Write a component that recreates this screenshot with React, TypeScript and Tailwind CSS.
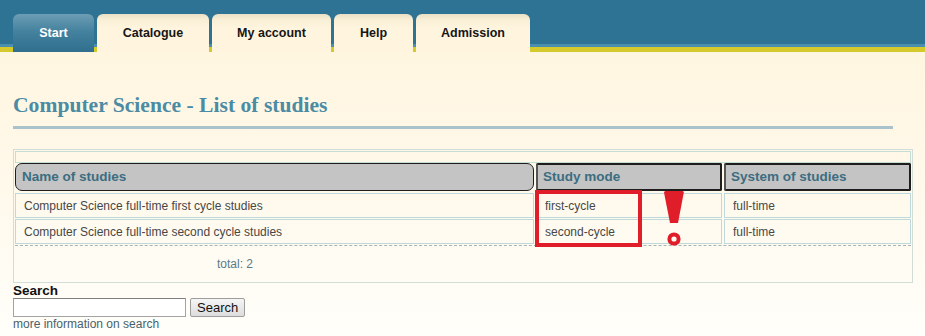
const TABS = [
  { label: 'Start', active: true, width: 'w-[81px]' },
  { label: 'Catalogue', active: false, width: 'w-[112px]' },
  { label: 'My account', active: false, width: 'w-[119px]' },
  { label: 'Help', active: false, width: 'w-[79px]' },
  { label: 'Admission', active: false, width: 'w-[114px]' },
]

const ROWS = [
  { name: 'Computer Science full-time first cycle studies', mode: 'first-cycle', system: 'full-time' },
  { name: 'Computer Science full-time second cycle studies', mode: 'second-cycle', system: 'full-time' },
]

function Exclamation() {
  return (
    <svg width="26" height="60" viewBox="0 0 26 60" className="absolute left-[647px] top-[40px]">
      <path d="M3 2.5 Q3 1 4.5 1 L21.5 1 Q23 1 22.8 2.5 L17 33 L9 33 Z" fill="#e01e2a" />
      <circle cx="13" cy="49" r="4.6" fill="none" stroke="#e01e2a" strokeWidth="4" />
    </svg>
  )
}

export default function App() {
  return (
    <div className="min-h-[336px] bg-[linear-gradient(to_bottom,#fff5dc_0%,#fff8e8_45%,#fffefa_100%)] font-['Liberation_Sans',Arial,sans-serif] text-[#444]">
      {/* Nav bar */}
      <nav className="h-[52px] pl-[13px] pt-[14px] flex items-end gap-[3px] bg-[linear-gradient(to_bottom,#2f7394_0px,#2f7394_44px,#4b8fae_44px,#4b8fae_47px,#d6c92c_47px,#d6c92c_52px)]">
        {TABS.map((t) =>
          t.active ? (
            <div
              key={t.label}
              className={`${t.width} h-[38px] rounded-t-[6px] flex items-center justify-center text-[12.5px] font-bold text-white bg-[linear-gradient(to_bottom,#6d9db4_0%,#44829f_45%,#2f6f8d_100%)]`}
            >
              {t.label}
            </div>
          ) : (
            <div
              key={t.label}
              className={`${t.width} h-[38px] rounded-t-[6px] flex items-center justify-center text-[12.5px] font-bold text-[#161616] bg-[linear-gradient(to_bottom,#e9e0c5_0px,#f8efd6_6px,#fff5de_14px,#fff5de_100%)]`}
            >
              {t.label}
            </div>
          )
        )}
      </nav>

      <main className="px-[13px]">
        <h1 className="mt-[40px] leading-[26px] text-[21.6px] font-bold text-[#4b8ba4] font-['Liberation_Serif','Times_New_Roman',serif]">
          Computer Science - List of studies
        </h1>
        <div className="mt-[8px] h-[3px] w-[880px] bg-[#a9c2cc]" />

        {/* Studies table */}
        <div className="relative mt-[20px] w-[900px] border border-[#d2ddd8] p-[1px]">
          <div className="h-[12px] border border-[#c6ddd4]" />

          <div className="grid grid-cols-[519px_186px_187px] gap-[2px] text-[13.5px] font-bold text-[#3c6d81]">
            <div className="h-[28px] flex items-center pl-[6px] bg-[#c4c4c4] border-[1.5px] border-[#1e1e1e] rounded-[7px]">
              Name of studies
            </div>
            <div className="h-[28px] flex items-center pl-[5px] bg-[#c4c4c4] border-2 border-[#1e1e1e] border-l-[#555] rounded-[2px]">
              Study mode
            </div>
            <div className="h-[28px] flex items-center pl-[5px] bg-[#c4c4c4] border-2 border-[#1e1e1e] border-l-[#555] rounded-[2px]">
              System of studies
            </div>
          </div>

          <div className="mt-[2px] flex flex-col gap-[1px] text-[12px] text-[#474747]">
            {ROWS.map((r) => (
              <div key={r.name} className="grid grid-cols-[519px_186px_187px] gap-[2px]">
                <div className="h-[25px] flex items-center pl-[8px] border border-[#bfd8db]">{r.name}</div>
                <div className="h-[25px] flex items-center pl-[8px] border border-[#bfd8db]">{r.mode}</div>
                <div className="h-[25px] flex items-center pl-[8px] border border-[#bfd8db]">{r.system}</div>
              </div>
            ))}
          </div>

          <div className="mt-[1px] border-t border-dashed border-[#a8b4b4]" />
          <div className="h-[35px] flex items-center pl-[202px] text-[12px] text-[#5b7a86]">total: 2</div>

          {/* Annotation */}
          <div className="absolute left-[521px] top-[40px] w-[107px] h-[57px] border-[4px] border-[#e01e2a]" />
          <Exclamation />
        </div>

        {/* Search */}
        <div className="text-[13.5px] leading-[15px] font-bold text-[#111]">Search</div>
        <div className="flex items-center gap-[4px]">
          <input className="w-[173px] h-[19px] border border-[#a3a3a3] border-t-[#7f7f7f] bg-white outline-none" />
          <button className="h-[19px] px-[6px] text-[13px] leading-[15px] text-[#111] border border-[#9d9d9d] rounded-[2px] bg-[linear-gradient(to_bottom,#f5f5f5,#dddddd)]">
            Search
          </button>
        </div>
        <div className="text-[12px] leading-[14px] text-[#48616c]">more information on search</div>
      </main>
    </div>
  )
}
